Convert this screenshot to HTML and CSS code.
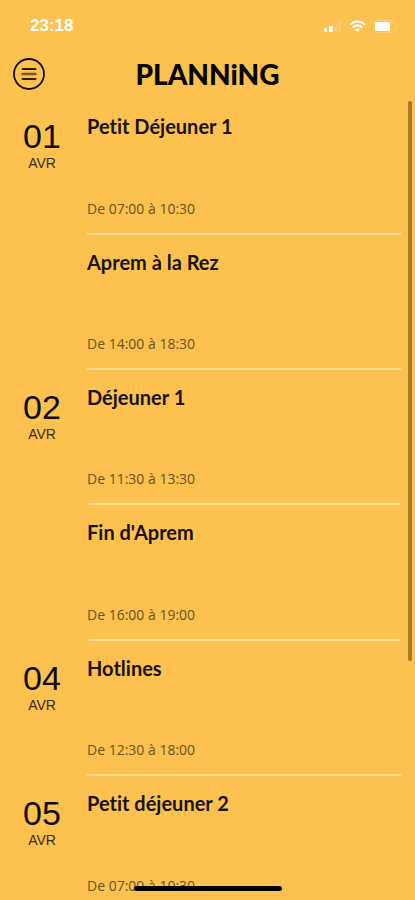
FILE: index.html
```html
<!DOCTYPE html>
<html lang="fr">
<head>
<meta charset="utf-8">
<meta name="viewport" content="width=device-width, initial-scale=1">
<title>Planning</title>
<link rel="stylesheet" href="styles.css">
</head>
<body>
<div class="app">
  <div class="status">
    <span class="clock">23:18</span>
    <div class="indicators">
      <svg width="19" height="12" viewBox="0 0 19 12" fill="#fff" aria-hidden="true">
        <rect x="1" y="8" width="3" height="4" rx="1"/>
        <rect x="6" y="6" width="4" height="6" rx="1"/>
        <rect x="11" y="3" width="3" height="9" rx="1" opacity=".15"/>
        <rect x="15" y="0" width="3" height="12" rx="1" opacity=".15"/>
      </svg>
      <svg width="17" height="13" viewBox="0 0 17 13" fill="none" stroke="#fff" stroke-width="2.200" aria-hidden="true">
        <path d="M1 4.600Q8.500-1.800 16 4.600"/>
        <path d="M3.700 7.500Q8.500 3.400 13.300 7.500"/>
        <path d="M6 9.400Q8.500 7.400 11 9.400L8.500 12Z" fill="#fff" stroke="none"/>
      </svg>
      <svg width="26" height="13" viewBox="0 0 26 13" aria-hidden="true">
        <rect x=".5" y=".5" width="22" height="12" rx="3.500" fill="none" stroke="#fff" opacity=".22"/>
        <rect x="2" y="2" width="15" height="9" rx="1.500" fill="#fff"/>
        <path d="M24 4.500Q26 6.500 24 8.500Z" fill="#fff" opacity=".3"/>
      </svg>
    </div>
  </div>
  <header class="header">
    <button class="menu" type="button" aria-label="Menu">
      <svg width="32" height="32" viewBox="0 0 32 32" fill="none" aria-hidden="true">
        <circle cx="16" cy="16" r="15" stroke="#100c04" stroke-width="1.800"/>
        <path d="M9.500 11H22.500M9.500 21H22.500" stroke="#2c200c" stroke-width="2" stroke-linecap="round"/>
        <path d="M9.500 16H22.500" stroke="#795a24" stroke-width="2.400" stroke-linecap="round"/>
      </svg>
    </button>
    <h1 class="title">PLANNiNG</h1>
  </header>
  <main class="list">
    <section class="day">
      <div class="date"><span class="num">01</span><span class="month">AVR</span></div>
      <div class="events">
        <article class="event"><h2>Petit Déjeuner 1</h2><p>De 07:00 à 10:30</p></article>
        <article class="event"><h2>Aprem à la Rez</h2><p>De 14:00 à 18:30</p></article>
      </div>
    </section>
    <section class="day">
      <div class="date"><span class="num">02</span><span class="month">AVR</span></div>
      <div class="events">
        <article class="event"><h2>Déjeuner 1</h2><p>De 11:30 à 13:30</p></article>
        <article class="event"><h2>Fin d'Aprem</h2><p>De 16:00 à 19:00</p></article>
      </div>
    </section>
    <section class="day">
      <div class="date"><span class="num">04</span><span class="month">AVR</span></div>
      <div class="events">
        <article class="event"><h2>Hotlines</h2><p>De 12:30 à 18:00</p></article>
      </div>
    </section>
    <section class="day">
      <div class="date"><span class="num">05</span><span class="month">AVR</span></div>
      <div class="events">
        <article class="event"><h2>Petit déjeuner 2</h2><p>De 07:00 à 10:30</p></article>
      </div>
    </section>
  </main>
  <div class="scrollbar"></div>
  <div class="home"></div>
</div>
</body>
</html>
```
FILE: styles.css
```css
* { box-sizing: border-box; margin: 0; }

body {
  background: #fdc150;
  color: #17120a;
  font-family: "Liberation Sans", Arial, sans-serif;
}

.app {
  position: relative;
  display: flex;
  flex-direction: column;
  height: 100vh;
  overflow: hidden;
}

.status {
  display: flex;
  flex: none;
  justify-content: space-between;
  align-items: center;
  height: 52px;
  padding: 0 16px 0 30px;
  color: #fff;
}

.clock { font: 700 17px/20px "Liberation Sans", sans-serif; }

.indicators { display: flex; align-items: center; gap: 7px; }

.header {
  display: grid;
  flex: none;
  grid-template-columns: 32px 1fr 32px;
  align-items: center;
  height: 47px;
  padding: 0 13px 3px;
}

.menu {
  width: 32px;
  height: 32px;
  padding: 0;
  border: 0;
  background: none;
}

.menu svg { display: block; }

.title {
  color: #000;
  font: 900 28px/40px Lato, sans-serif;
  text-align: center;
}

.list { flex: 1; min-height: 0; overflow: hidden; }

.day {
  display: grid;
  grid-template-columns: 87px 1fr;
  padding-right: 14px;
}

.date {
  display: flex;
  flex-direction: column;
  align-items: center;
  padding: 18px 3px 0 0;
}

.num { font-size: 34px; line-height: 38px; color: #0d0a05; }

.month { font-size: 14px; line-height: 16px; color: #3a2d15; }

.event {
  display: flex;
  flex-direction: column;
  justify-content: space-between;
  height: 135px;
  padding: 14px 0;
  border-bottom: 2px solid #fedc98;
}

.day:first-child .event:first-child,
.day:nth-child(2n) .event:last-child { height: 136px; }

h2 {
  font: 700 20px/26px Lato, sans-serif;
  font-variant-ligatures: none;
}

.event p { font: 400 14px/20px "Open Sans", sans-serif; color: #6b5223; }

.scrollbar {
  position: absolute;
  top: 101px;
  right: 3px;
  width: 4px;
  height: 62.2%;
  border-radius: 2px;
  background: #a87824;
}

.home {
  position: absolute;
  bottom: 9px;
  left: 50%;
  width: 148px;
  height: 5px;
  border-radius: 3px;
  background: #000;
  transform: translateX(-50%);
}
```
